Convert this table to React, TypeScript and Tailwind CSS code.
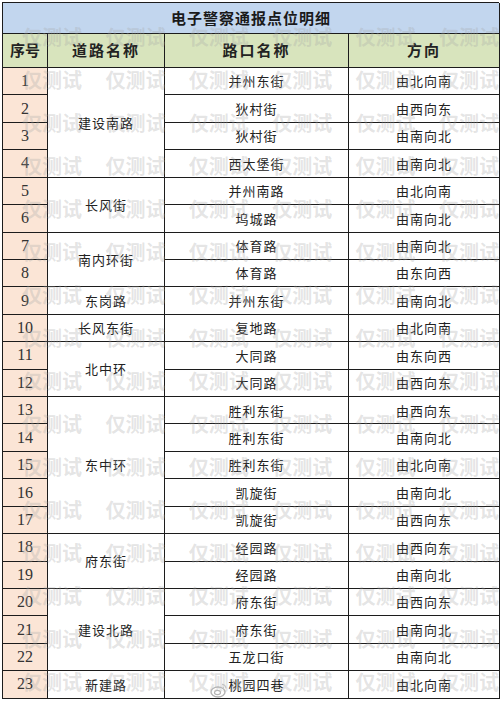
import React from "react";

type Row = { no: number; cross: string; dir: string };

const rows: Row[] = [
  { no: 1, cross: "并州东街", dir: "由北向南" },
  { no: 2, cross: "狄村街", dir: "由西向东" },
  { no: 3, cross: "狄村街", dir: "由南向北" },
  { no: 4, cross: "西太堡街", dir: "由南向北" },
  { no: 5, cross: "并州南路", dir: "由北向南" },
  { no: 6, cross: "坞城路", dir: "由南向北" },
  { no: 7, cross: "体育路", dir: "由南向北" },
  { no: 8, cross: "体育路", dir: "由东向西" },
  { no: 9, cross: "并州东街", dir: "由南向北" },
  { no: 10, cross: "复地路", dir: "由北向南" },
  { no: 11, cross: "大同路", dir: "由东向西" },
  { no: 12, cross: "大同路", dir: "由西向东" },
  { no: 13, cross: "胜利东街", dir: "由西向东" },
  { no: 14, cross: "胜利东街", dir: "由南向北" },
  { no: 15, cross: "胜利东街", dir: "由北向南" },
  { no: 16, cross: "凯旋街", dir: "由南向北" },
  { no: 17, cross: "凯旋街", dir: "由西向东" },
  { no: 18, cross: "经园路", dir: "由西向东" },
  { no: 19, cross: "经园路", dir: "由南向北" },
  { no: 20, cross: "府东街", dir: "由西向东" },
  { no: 21, cross: "府东街", dir: "由南向北" },
  { no: 22, cross: "五龙口街", dir: "由南向北" },
  { no: 23, cross: "桃园四巷", dir: "由北向南" },
];

// road name → first row index, span
const roads: Record<number, { name: string; span: number }> = {
  0: { name: "建设南路", span: 4 },
  4: { name: "长风街", span: 2 },
  6: { name: "南内环街", span: 2 },
  8: { name: "东岗路", span: 1 },
  9: { name: "长风东街", span: 1 },
  10: { name: "北中环", span: 2 },
  12: { name: "东中环", span: 5 },
  17: { name: "府东街", span: 2 },
  19: { name: "建设北路", span: 3 },
  22: { name: "新建路", span: 1 },
};

const cell = "border-r border-b border-[#1c1c1c] flex items-center justify-center";

function Watermark() {
  const marks = Array.from({ length: 16 * 6 });
  return (
    <div className="pointer-events-none absolute left-[20px] top-[24px] grid grid-cols-[repeat(6,83.4px)] auto-rows-[43px]">
      {marks.map((_, i) => (
        <span
          key={i}
          className="h-[22px] w-[60px] text-[20px] leading-[22px] font-bold text-[rgba(165,165,165,0.3)] whitespace-nowrap"
        >
          仅测试
        </span>
      ))}
    </div>
  );
}

export default function App() {
  return (
    <div className="w-[500px] h-[702px] bg-white overflow-hidden font-['Noto_Sans_CJK_SC',sans-serif] text-[#222]">
      <div className="relative ml-[2px] mt-[2px] w-[497px]">
        <div className="grid grid-cols-[45px_117px_184px_151px] grid-rows-[31px_34px_repeat(23,27.43px)] border-t border-l border-[#1c1c1c]">
          <div className={`${cell} col-span-4 bg-[#c2d6ee] text-[15px] font-bold tracking-[1px] text-[#1a1a1a]`}>
            电子警察通报点位明细
          </div>
          <div className={`${cell} bg-[#d8e4bd] text-[15px] font-bold`}>序号</div>
          <div className={`${cell} bg-[#d8e4bd] text-[15px] font-bold tracking-[2px]`}>道路名称</div>
          <div className={`${cell} bg-[#d8e4bd] text-[15px] font-bold tracking-[2px]`}>路口名称</div>
          <div className={`${cell} bg-[#d8e4bd] text-[15px] font-bold tracking-[2px]`}>方向</div>
          {rows.map((r, i) => (
            <React.Fragment key={r.no}>
              <div
                className={`${cell} col-start-1 bg-[#fbe5d6] text-[16px] font-['Liberation_Serif',serif] text-[#333]`}
                style={{ gridRow: i + 3 }}
              >
                {r.no}
              </div>
              {roads[i] && (
                <div
                  className={`${cell} col-start-2 bg-white text-[13px] tracking-[1px]`}
                  style={{ gridRow: `${i + 3} / span ${roads[i].span}` }}
                >
                  {roads[i].name}
                </div>
              )}
              <div className={`${cell} col-start-3 text-[13px] tracking-[1px]`} style={{ gridRow: i + 3 }}>
                {r.cross}
              </div>
              <div className={`${cell} col-start-4 text-[13px] tracking-[1px]`} style={{ gridRow: i + 3 }}>
                {r.dir}
              </div>
            </React.Fragment>
          ))}
        </div>
        <Watermark />
        <svg className="pointer-events-none absolute left-[208px] top-[680px]" width="18" height="16" viewBox="0 0 18 16">
          <ellipse cx="8" cy="10" rx="7" ry="5" fill="none" stroke="#b5b5b5" strokeWidth="1.4" />
          <ellipse cx="7.5" cy="10.5" rx="3" ry="2.2" fill="none" stroke="#b5b5b5" strokeWidth="1.2" />
          <path d="M12 2.5 A4 4 0 0 1 16 6.5" fill="none" stroke="#c5c5c5" strokeWidth="1.3" />
          <path d="M12.5 4.8 A2 2 0 0 1 14 6.3" fill="none" stroke="#c5c5c5" strokeWidth="1.2" />
        </svg>
      </div>
    </div>
  );
}
